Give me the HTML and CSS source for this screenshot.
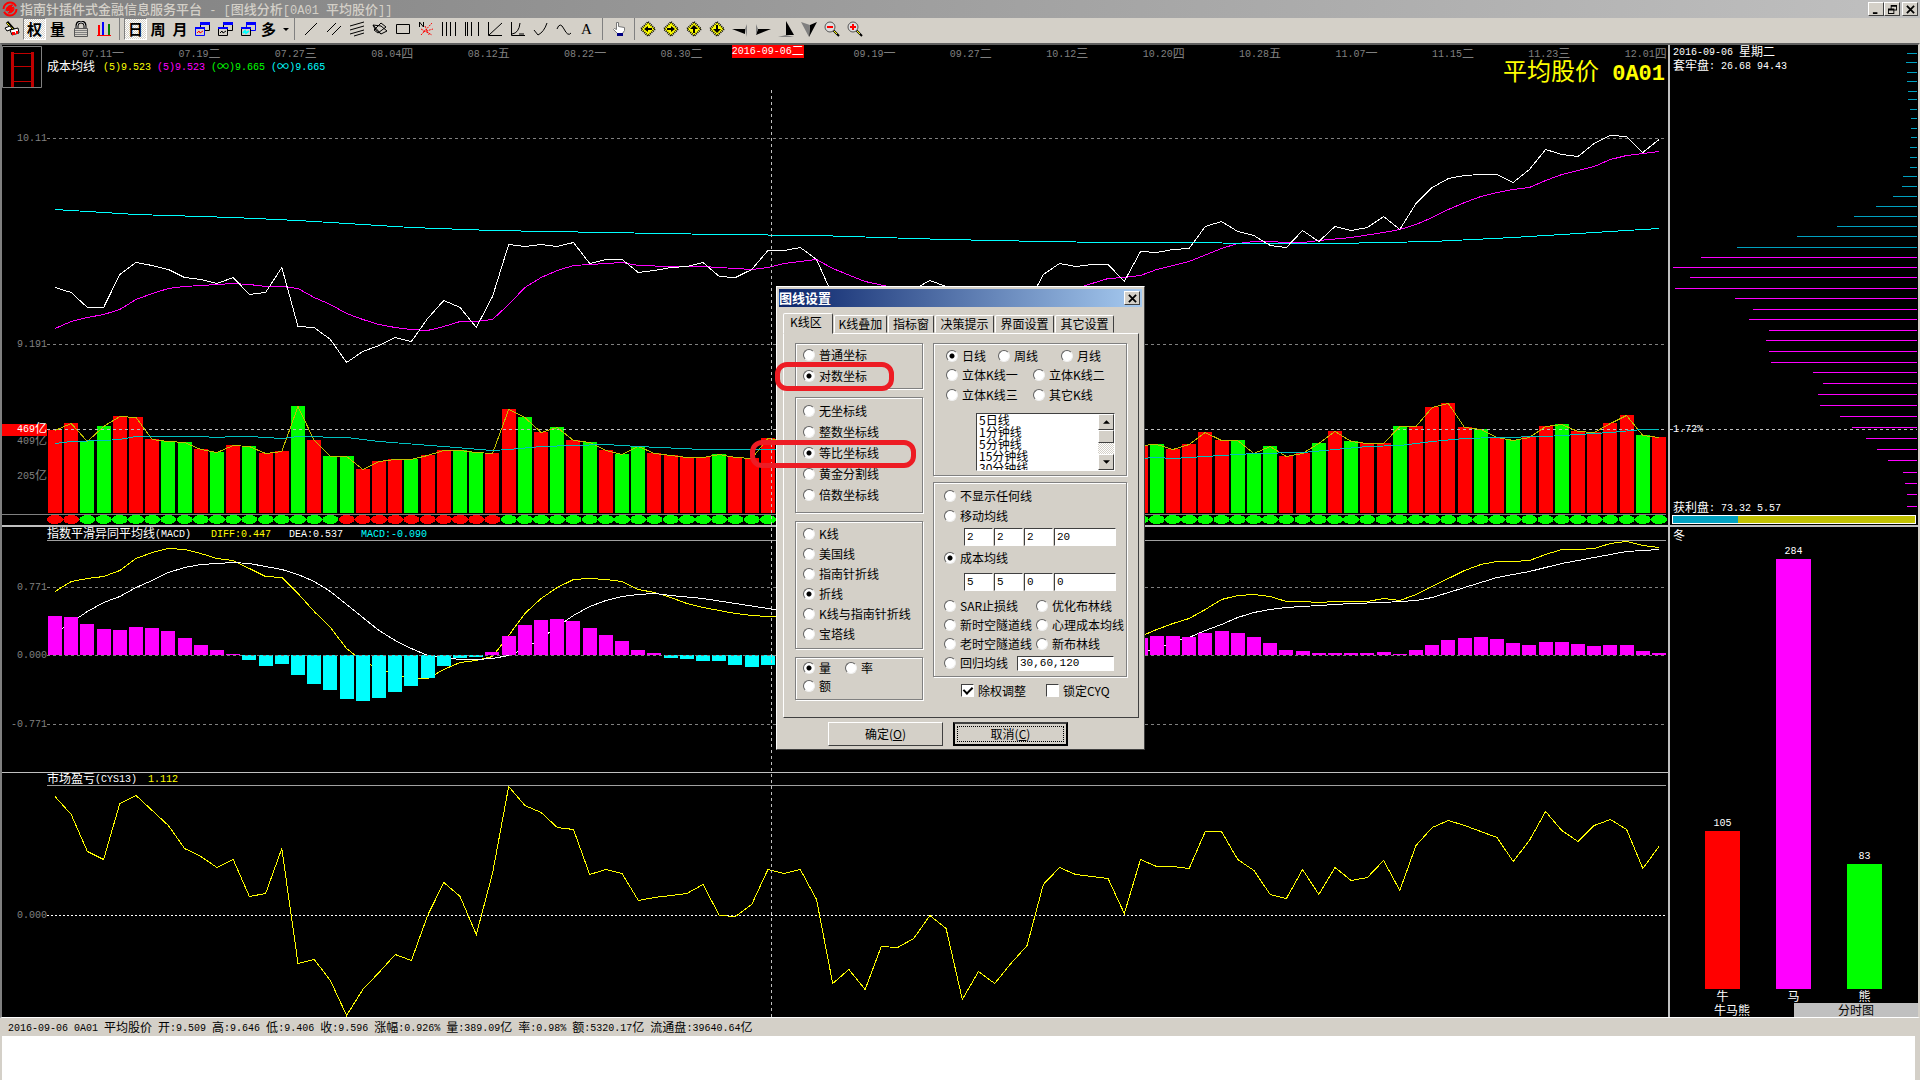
FILE: index.html
```
<!DOCTYPE html>
<html lang="zh-CN">
<head>
  <meta charset="UTF-8">
  <title>指南针插件式金融信息服务平台</title>
  <meta name="viewport" content="width=device-width, initial-scale=1.0">
  <link rel="stylesheet" href="styles.css">
</head>
<body>
  <header class="titlebar">
    <svg class="logo" viewBox="0 0 16 16"><circle cx="8" cy="8" r="6.5" fill="none" stroke="#f00" stroke-width="2" stroke-dasharray="17 3"/><path d="M4 10c0-4 3-6 7-6M6 12c4 0 6-2 6-5M5 7l5-3-1 3 3-1-5 6 1-3-3 1z" fill="#f00" stroke="#f00"/></svg>
    <h1>指南针插件式金融信息服务平台<span> - [</span>图线分析<span>[0A01 </span>平均股价<span>]]</span></h1>
    <div class="win-buttons">
      <button class="win-btn" aria-label="最小化"><svg viewBox="0 0 10 10"><path d="M1 8h5v2H1z"/></svg></button>
      <button class="win-btn" aria-label="还原"><svg viewBox="0 0 10 10"><path d="M3 0h7v6H7v4H0V4h3zM4 2v2h3v1h2V2zM1 6v3h5V6z" fill-rule="evenodd"/></svg></button>
      <button class="win-btn last" aria-label="关闭"><svg viewBox="0 0 10 10"><path d="M1 1l8 8M9 1L1 9" stroke="#000" stroke-width="2"/></svg></button>
    </div>
  </header>

  <nav class="toolbar">
    <div class="tools">
      <button class="tool" aria-label="编辑"><svg viewBox="0 0 16 16"><path d="M3 1l7 8" stroke="#000" stroke-width="3"/><path d="M3 2l6 6" stroke="#ff0"/><path d="M1 7l5-2 2 3-5 2zM6 9l8-2 1 5-7 2z" fill="#fff" stroke="#000"/><path d="M8 11h3v3H8zM12 10h2v3h-2z" fill="#f00"/></svg></button>
      <button class="tool on">权</button>
      <button class="tool">量</button>
      <button class="tool" aria-label="锁定"><svg viewBox="0 0 16 16"><path d="M4 8V5q0-4 4-4t4 4v3" fill="none" stroke="#000" stroke-width="3"/><path d="M4 8V5q0-4 4-4t4 4v3" fill="none" stroke="#ccc"/><path d="M1.500 7.500h13v8h-13z" fill="#d4d0c8" stroke="#555"/><path d="M2 9.500h12M2 11.500h12M2 13.500h12" stroke="#808080"/></svg></button>
      <button class="tool" aria-label="柱图"><svg viewBox="0 0 16 16"><path d="M1 14.500h14" stroke="#f00"/><path d="M3 4v10" stroke="#f00" stroke-width="2"/><path d="M7 1v13" stroke="#00f" stroke-width="2"/><path d="M13 3v11" stroke="green" stroke-width="2"/></svg></button>
    </div>
    <div class="tools">
      <button class="tool on">日</button>
      <button class="tool word">周</button>
      <button class="tool word">月</button>
      <button class="tool" aria-label="窗口一"><svg viewBox="0 0 16 16"><path d="M5.500 2.500h9v7h-9z" fill="#d4d0c8" stroke="#000"/><path d="M5 1h10v3H5z" fill="#00f"/><path d="M.5 6.500h9v8h-9z" fill="#d4d0c8" stroke="#00f"/><path d="M0 6h10v2H0z" fill="#00f"/><path d="M2 12l2-2 1 2 3-2" fill="none" stroke="#f00"/></svg></button>
      <button class="tool" aria-label="窗口二"><svg viewBox="0 0 16 16"><path d="M5.500 2.500h9v7h-9z" fill="#d4d0c8" stroke="#000"/><path d="M5 1h10v3H5z" fill="#00f"/><path d="M.5 6.500h9v8h-9z" fill="#d4d0c8" stroke="#000"/><path d="M0 6h10v2H0z" fill="#00f"/><path d="M2 12l2-2 1 2 3-2" fill="none" stroke="#000"/></svg></button>
      <button class="tool" aria-label="窗口三"><svg viewBox="0 0 16 16"><path d="M5.500 2.500h9v7h-9z" fill="#d4d0c8" stroke="#00f"/><path d="M5 1h10v3H5z" fill="#00f"/><path d="M.5 6.500h9v8h-9z" fill="#d4d0c8" stroke="#000"/><path d="M0 6h10v2H0z" fill="#00f"/><path d="M2 12l2-2 1 2 3-2" fill="none" stroke="#0ff" stroke-width="2"/></svg></button>
      <button class="tool small">多</button>
      <button class="tool small" aria-label="更多"><svg viewBox="0 0 16 16"><path d="M5 7h6l-3 3z"/></svg></button>
    </div>
    <div class="tools line-tools">
      <button class="tool" aria-label="直线"><svg viewBox="0 0 16 16"><path d="M2 14L14 2"/></svg></button>
      <button class="tool" aria-label="平行线"><svg viewBox="0 0 16 16"><path d="M1 11L10 2M6 14l9-9"/></svg></button>
      <button class="tool" aria-label="多平行线"><svg viewBox="0 0 16 16"><path d="M1 5l14-4M1 9l14-4M1 13l14-4M5 15l10-3"/></svg></button>
      <button class="tool" aria-label="多边形"><svg viewBox="0 0 16 16"><path d="M1 4l8 1 6 5-6 3-6-5zM1 4l8 9M9 2l5 4-8 6-4-3z"/></svg></button>
      <button class="tool" aria-label="矩形"><svg viewBox="0 0 16 16"><path d="M1.500 3.500h13v9h-13z"/></svg></button>
      <button class="tool" aria-label="扇形线"><svg viewBox="0 0 16 16"><path d="M1.500 6V1l4 5V1"/><path d="M3 14L14 2M3 8l11 6M7 5l4 9M5 11l10-3" stroke="#f00" stroke-dasharray="2 1"/></svg></button>
      <button class="tool" aria-label="等距线"><svg viewBox="0 0 16 16"><path d="M1.500 1v14M5.500 1v14M9.500 1v14M14.500 1v14"/></svg></button>
      <button class="tool" aria-label="周期线"><svg viewBox="0 0 16 16"><path d="M1.500 1v14M3.500 1v14M7.500 1v14M14.500 1v14"/></svg></button>
      <button class="tool" aria-label="角度线"><svg viewBox="0 0 16 16"><path d="M1.500 1v13.500H15M2 14L15 2"/></svg></button>
      <button class="tool" aria-label="弧线"><svg viewBox="0 0 16 16"><path d="M1.500 1v13.500H15M2 13q7-1 8-11M9 13l5 0"/></svg></button>
      <button class="tool" aria-label="抛物线"><svg viewBox="0 0 16 16"><path d="M1 9l4 5q6-3 9-12"/></svg></button>
      <button class="tool" aria-label="正弦线"><svg viewBox="0 0 16 16"><path d="M1 8q3-8 7 0t7 4"/></svg></button>
      <button class="tool letter">A</button>
    </div>
    <div class="tools hand">
      <button class="tool" aria-label="手形"><svg viewBox="0 0 16 16"><path d="M5.500 1.500h2v4l6 1v3l-2 3h-5l-4-4 1-1 2 1z" fill="#fff" stroke="#777"/><path d="M6 12h6v3H6z" fill="#000080"/></svg></button>
    </div>
    <div class="tools">
      <button class="tool" aria-label="左移"><svg viewBox="0 0 16 16"><path d="M8 1l7 7-7 7-7-7z" fill="#ff0" stroke="#000" stroke-dasharray="1 1" stroke-width="2"/><path d="M4 8l4-3v2h4v2H8v2z"/></svg></button>
      <button class="tool" aria-label="右移"><svg viewBox="0 0 16 16"><path d="M8 1l7 7-7 7-7-7z" fill="#ff0" stroke="#000" stroke-dasharray="1 1" stroke-width="2"/><path d="M12 8L8 5v2H4v2h4v2z"/></svg></button>
      <button class="tool" aria-label="上移"><svg viewBox="0 0 16 16"><path d="M8 1l7 7-7 7-7-7z" fill="#ff0" stroke="#000" stroke-dasharray="1 1" stroke-width="2"/><path d="M8 4l4 4h-3v4H7V8H4z"/></svg></button>
      <button class="tool" aria-label="下移"><svg viewBox="0 0 16 16"><path d="M8 1l7 7-7 7-7-7z" fill="#ff0" stroke="#000" stroke-dasharray="1 1" stroke-width="2"/><path d="M8 12L4 8h3V4h2v4h3z"/></svg></button>
      <button class="tool" aria-label="向左"><svg viewBox="0 0 16 16"><path d="M0 8h13v5z"/><path d="M13 8l2-5v13z" fill="#808080"/></svg></button>
      <button class="tool" aria-label="向右"><svg viewBox="0 0 16 16"><path d="M16 8H3l-2 6z"/><path d="M1 14V3l2 5z" fill="#808080"/></svg></button>
      <button class="tool" aria-label="向上"><svg viewBox="0 0 16 16"><path d="M8 0v14h8z"/><path d="M0 16l8-2 8 2z" fill="#808080"/></svg></button>
      <button class="tool" aria-label="向下"><svg viewBox="0 0 16 16"><path d="M8 16l1-12 7-3z"/><path d="M0 1l9 3-1 12z" fill="#808080"/></svg></button>
      <button class="tool" aria-label="缩小"><svg viewBox="0 0 16 16"><path d="M9 9l6 6" stroke="#000" stroke-width="2"/><path d="M10 10l3 3" stroke="#ff0"/><circle cx="6" cy="6" r="5" fill="#ddd" stroke="#555"/><path d="M3 6h6" stroke="#f00" stroke-width="2"/></svg></button>
      <button class="tool" aria-label="放大"><svg viewBox="0 0 16 16"><path d="M9 9l6 6" stroke="#000" stroke-width="2"/><path d="M10 10l3 3" stroke="#ff0"/><circle cx="6" cy="6" r="5" fill="#ddd" stroke="#555"/><path d="M3 6h6M6 3v6" stroke="#f00" stroke-width="2"/></svg></button>
    </div>
  </nav>

  <main class="workspace">
    <section class="charts">
      <div class="panel price">
        <svg id="price" class="plot" viewBox="2 45 1666 480" preserveAspectRatio="none"></svg>
        <div class="dates">
          <span>07.11<i>一</i></span><span>07.19<i>二</i></span><span>07.27<i>三</i></span><span>08.04<i>四</i></span><span>08.12<i>五</i></span><span>08.22<i>一</i></span><span>08.30<i>二</i></span><span class="covered">09.07<i>三</i></span><span>09.19<i>一</i></span><span>09.27<i>二</i></span><span>10.12<i>三</i></span><span>10.20<i>四</i></span><span>10.28<i>五</i></span><span>11.07<i>一</i></span><span>11.15<i>二</i></span><span>11.23<i>三</i></span><span>12.01<i>四</i></span>
        </div>
        <svg class="period" viewBox="0 0 40 42"><path d="M.5.5h39v41H.5z" fill="#000" stroke="#808080"/><path d="M10.500 6v35M30.500 6v35" stroke="#c00000" stroke-width="3"/><path d="M9 7.500h22M10 20.500h21M10 35.500h21" stroke="#c00000"/></svg>
        <div class="legend">
          <span><i>成本均线</i></span>
          <span class="yellow">(5)9.523</span>
          <span class="magenta">(5)9.523</span>
          <span class="green">(<i>∞</i>)9.665</span>
          <span class="cyan">(<i>∞</i>)9.665</span>
        </div>
        <h2 class="stock">平均股价<b> 0A01</b></h2>
        <span class="axis y1011">10.11</span>
        <span class="axis y9191">9.191</span>
        <span class="axis y409">409<i>亿</i></span>
        <span class="axis y205">205<i>亿</i></span>
        <span class="axis y469">469<i>亿</i></span>
      </div>
      <div class="panel macd">
        <svg id="macd" class="plot" viewBox="2 527 1666 245" preserveAspectRatio="none"></svg>
        <div class="legend">
          <span><i>指数平滑异同平均线</i>(MACD)</span>
          <span class="yellow">DIFF:0.447</span>
          <span>DEA:0.537</span>
          <span class="cyan">MACD:-0.090</span>
        </div>
        <span class="axis m1">0.771</span>
        <span class="axis m2">0.000</span>
        <span class="axis m3">-0.771</span>
      </div>
      <div class="panel cys">
        <svg id="cys" class="plot" viewBox="2 773 1666 244" preserveAspectRatio="none"></svg>
        <div class="legend">
          <span><i>市场盈亏</i>(CYS13)</span>
          <span class="yellow">1.112</span>
        </div>
        <span class="axis c0">0.000</span>
      </div>
      <div class="cursor"></div>
      <div class="cursor-date">2016-09-06<i>二</i></div>
    </section>

    <aside class="side">
      <div class="panel chips">
        <svg id="chips" class="plot" viewBox="1670 45 248 480" preserveAspectRatio="none"></svg>
        <div class="chips-text">
          <p>2016-09-06 <i>星期二</i></p>
          <p><i>套牢盘</i>: 26.68 94.43</p>
        </div>
        <span class="percent">1.72%</span>
        <div class="profit">
          <p><i>获利盘</i>: 73.32 5.57</p>
          <div class="gauge"><div class="gauge-fill" style="width: 26.68%"></div></div>
        </div>
      </div>
      <div class="bulls">
        <span class="season"><i>冬</i></span>
        <div class="cols">
          <div class="col"><b>105</b><div class="bar red" style="height: 158px"></div><i>牛</i></div>
          <div class="col"><b>284</b><div class="bar pink" style="height: 430px"></div><i>马</i></div>
          <div class="col"><b>83</b><div class="bar lime" style="height: 125px"></div><i>熊</i></div>
        </div>
        <div class="side-tabs">
          <button class="side-tab current">牛马熊</button>
          <button class="side-tab">分时图</button>
        </div>
      </div>
    </aside>

    <section class="dialog" role="dialog" aria-label="图线设置">
      <div class="dialog-title">
        <h2>图线设置</h2>
        <button class="win-btn" aria-label="关闭"><svg viewBox="0 0 10 10"><path d="M1 1l8 8M9 1L1 9" stroke="#000" stroke-width="2"/></svg></button>
      </div>
      <div class="tabs">
        <button class="tab active">K线区</button>
        <button class="tab">K线叠加</button>
        <button class="tab short">指标窗</button>
        <button class="tab long">决策提示</button>
        <button class="tab long">界面设置</button>
        <button class="tab long">其它设置</button>
      </div>
      <form class="pane">
        <div class="left-col">
          <fieldset class="group coord">
            <label><input type="radio" name="coord">普通坐标</label>
            <label><input type="radio" name="coord" checked>对数坐标</label>
          </fieldset>
          <fieldset class="group grid">
            <label><input type="radio" name="grid">无坐标线</label>
            <label><input type="radio" name="grid">整数坐标线</label>
            <label><input type="radio" name="grid" checked>等比坐标线</label>
            <label><input type="radio" name="grid">黄金分割线</label>
            <label><input type="radio" name="grid">倍数坐标线</label>
          </fieldset>
          <fieldset class="group kind">
            <label><input type="radio" name="kind">K线</label>
            <label><input type="radio" name="kind">美国线</label>
            <label><input type="radio" name="kind">指南针折线</label>
            <label><input type="radio" name="kind" checked>折线</label>
            <label><input type="radio" name="kind">K线与指南针折线</label>
            <label><input type="radio" name="kind">宝塔线</label>
          </fieldset>
          <fieldset class="group amount">
            <label><input type="radio" name="amount" checked>量</label>
            <label><input type="radio" name="amount">率</label>
            <label><input type="radio" name="amount">额</label>
          </fieldset>
        </div>
        <div class="right-col">
          <fieldset class="group period-group">
            <div class="three">
              <label><input type="radio" name="period" checked>日线</label>
              <label><input type="radio" name="period">周线</label>
              <label><input type="radio" name="period">月线</label>
            </div>
            <div class="two">
              <label><input type="radio" name="period">立体K线一</label>
              <label><input type="radio" name="period">立体K线二</label>
              <label><input type="radio" name="period">立体K线三</label>
              <label><input type="radio" name="period">其它K线</label>
            </div>
            <div class="listbox">
              <select size="5" aria-label="周期">
                <option>5日线</option>
                <option>1分钟线</option>
                <option>5分钟线</option>
                <option>15分钟线</option>
                <option>30分钟线</option>
              </select>
              <div class="scroll">
                <button type="button" class="scroll-btn" aria-label="向上滚动"><svg viewBox="0 0 8 4"><path d="M4 0l4 4H0z"/></svg></button>
                <div class="thumb"></div>
                <button type="button" class="scroll-btn end" aria-label="向下滚动"><svg viewBox="0 0 8 4"><path d="M0 0h8L4 4z"/></svg></button>
              </div>
            </div>
          </fieldset>
          <fieldset class="group avg">
            <label><input type="radio" name="avg">不显示任何线</label>
            <label><input type="radio" name="avg">移动均线</label>
            <div class="nums">
              <input type="text" value="2" aria-label="移动均线一"><input type="text" value="2" aria-label="移动均线二"><input type="text" value="2" aria-label="移动均线三"><input type="text" class="big" value="20" aria-label="移动均线四">
            </div>
            <label><input type="radio" name="avg" checked>成本均线</label>
            <div class="nums cost">
              <input type="text" value="5" aria-label="成本均线一"><input type="text" value="5" aria-label="成本均线二"><input type="text" value="0" aria-label="成本均线三"><input type="text" class="big" value="0" aria-label="成本均线四">
            </div>
            <div class="pairs">
              <label><input type="radio" name="avg">SAR止损线</label>
              <label><input type="radio" name="avg">优化布林线</label>
              <label><input type="radio" name="avg">新时空隧道线</label>
              <label><input type="radio" name="avg">心理成本均线</label>
              <label><input type="radio" name="avg">老时空隧道线</label>
              <label><input type="radio" name="avg">新布林线</label>
            </div>
            <div class="regress">
              <label><input type="radio" name="avg">回归均线</label>
              <input type="text" value="30,60,120" aria-label="回归均线参数">
            </div>
          </fieldset>
          <div class="checks">
            <label><input type="checkbox" checked>除权调整</label>
            <label><input type="checkbox">锁定CYQ</label>
          </div>
        </div>
      </form>
      <div class="actions">
        <button class="btn">确定(<u>O</u>)</button>
        <button class="btn default">取消(<u>C</u>)</button>
      </div>
      <div class="mark mark-a"></div>
      <div class="mark mark-b"></div>
    </section>
  </main>

  <footer class="status">2016-09-06 0A01 <i>平均股价</i> <i>开</i>:9.509 <i>高</i>:9.646 <i>低</i>:9.406 <i>收</i>:9.596 <i>涨幅</i>:0.926% <i>量</i>:389.09<i>亿</i> <i>率</i>:0.98% <i>额</i>:5320.17<i>亿</i> <i>流通盘</i>:39640.64<i>亿</i></footer>
  <div class="blank"></div>

  <script src="script.js"></script>
</body>
</html>
```

FILE: styles.css
```
* { box-sizing: border-box; }
body {
  margin: 0; min-height: 100vh;
  display: flex; flex-direction: column;
  background: #d4d0c8; color: #000;
  font: 12px/14px "Noto Sans CJK SC", sans-serif;
}
button, input, select { font: inherit; color: inherit; margin: 0; padding: 0; border: 0; }
button { background: none; cursor: pointer; }
h1, h2, p { margin: 0; font-weight: normal; }
/* chinese glyphs inside the narrow mono text */
i { font: 12px/0 "Noto Sans CJK SC", sans-serif; font-style: normal; vertical-align: -1px; }

/* title bar */
.titlebar {
  display: flex; align-items: center; height: 18px; padding: 0 2px;
  background: linear-gradient(90deg, #808080, #c0c0c0);
}
.logo { width: 16px; height: 16px; margin-right: 2px; }
.titlebar h1 { flex: 1; font-size: 13px; line-height: 18px; font-weight: 500; color: #d4d0c8; white-space: pre; }
.titlebar h1 span { font: 12px/0 "Liberation Mono", monospace; }
.win-buttons { display: flex; }
.win-btn {
  display: flex; align-items: center; justify-content: center;
  width: 16px; height: 14px; background: #d4d0c8;
  border: 1px solid; border-color: #fff #404040 #404040 #fff;
}
.win-btn.last { margin-left: 2px; }
.win-btn svg { width: 9px; height: 9px; }

/* toolbar */
.toolbar { display: flex; height: 25px; }
.tools { display: flex; border-right: 1px solid #808080; margin-right: 4px; height: 22px; }
.tools:first-child { padding-right: 4px; }
.tools:last-child { border: 0; }
.tool {
  width: 23px; height: 22px; display: flex; align-items: center; justify-content: center;
  font-size: 15px; font-weight: 700; line-height: 20px;
}
.tool svg { width: 16px; height: 16px; }
.tool.word { width: 22px; }
.tool.small { width: 17px; }
.tool.letter { font: 15px "Liberation Serif", serif; }
.tool.on {
  border: 1px solid; border-color: #808080 #fff #fff #808080;
  background: repeating-conic-gradient(#fff 0 25%, #d4d0c8 0 50%) 0 0 / 2px 2px;
}
.line-tools { padding-right: 4px; }
.line-tools svg { fill: none; stroke: #000; }
.tools.hand { padding-right: 4px; margin-right: 1px; }

/* charts */
.workspace {
  flex: 1; display: flex; position: relative; min-height: 975px;
  border: solid #808080; border-width: 2px 2px 1px 2px;
  border-top-color: #606060; border-right-color: #d4d0c8; border-bottom-color: #fff;
  background: #c0c0c0;
  font: 10px/12px "Liberation Mono", monospace; color: #fff;
}
.charts { flex: 1; position: relative; display: flex; flex-direction: column; gap: 1px; margin-right: 2px; }
.panel { position: relative; background: #000; }
.price { flex: 480; margin-bottom: 1px; }
.macd { flex: 245; }
.cys { flex: 244; }
.plot { position: absolute; width: 100%; height: 100%; shape-rendering: crispEdges; }
.plot * { vector-effect: non-scaling-stroke; }
.dates {
  position: relative; display: flex; justify-content: space-between;
  padding: 4px 1px 0 80px; color: #808080;
}
.covered { visibility: hidden; }
.period { position: absolute; left: 0; top: 1px; width: 40px; height: 42px; }
.legend { position: relative; display: flex; gap: 6px; padding: 1px 0 0 45px; }
.legend span:first-child { margin-right: 2px; }
.macd .legend { gap: 18px; padding-top: 2px; }
.cys .legend { gap: 9px; }
.yellow { color: #ff0; }
.magenta { color: #f0f; }
.green { color: #0f0; }
.cyan { color: #0ff; }
.stock {
  position: absolute; right: 3px; top: 12px; color: #ff0; white-space: pre;
  font: 24px/26px "Noto Sans CJK SC", sans-serif;
}
.stock b { font: bold 22px/0 "Liberation Mono", monospace; }
.axis { position: absolute; left: 0; width: 45px; height: 12px; text-align: right; color: #808080; transform: translateY(-50%); }
.y1011 { top: 19.6%; }
.y9191 { top: 62.5%; }
.y409 { top: 82.8%; }
.y205 { top: 90%; }
.y469 { top: 80.2%; background: #f00; color: #fff; }
.m1 { top: 24.8%; }
.m2 { top: 52.5%; }
.m3 { top: 80.7%; }
.c0 { top: 58.5%; }
.cursor {
  position: absolute; left: 46.15%; top: 45px; bottom: 0; width: 1px;
  background: repeating-linear-gradient(#c0c0c0 0 3px, transparent 3px 6px);
}
.cursor-date { position: absolute; left: 43.8%; top: 0; padding-top: 1px; background: #f00; }

/* right side */
.side { width: 248px; display: flex; flex-direction: column; gap: 2px; }
.chips { flex: 480; }
.chips-text { position: relative; padding: 2px 3px; }
.chips-text p { height: 14px; }
.percent { position: absolute; left: 3px; top: 80.2%; transform: translateY(-50%); }
.profit { position: absolute; left: 2px; right: 2px; bottom: 1px; }
.profit p { padding-left: 1px; }
.gauge { height: 9px; border: 1px solid #fff; background: #c0c000; }
.gauge-fill { height: 100%; background: #00a0c0; }
.bulls { flex: 490; display: flex; flex-direction: column; background: #000; position: relative; }
.season { position: absolute; left: 3px; top: 4px; }
.cols { flex: 1; display: flex; justify-content: space-between; align-items: flex-end; padding: 0 36px 0 35px; }
.col { width: 35px; display: flex; flex-direction: column; align-items: center; }
.col b { font-weight: normal; line-height: 14px; }
.col i { line-height: 14px; }
.bar { width: 100%; }
.red { background: #f00; }
.pink { background: #f0f; }
.lime { background: #0f0; }
.side-tabs { display: flex; }
.side-tab { flex: 1; font: 12px/14px "Noto Sans CJK SC", sans-serif; background: #c0c0c0; color: #000; }
.side-tab.current { background: #000; color: #fff; }

/* settings dialog */
.dialog {
  position: absolute; left: 774px; top: 241px; width: 369px; height: 464px;
  padding: 2px; background: #d4d0c8; color: #000;
  border: 1px solid; border-color: #fff #404040 #404040 #fff;
  font: 12px/14px "Noto Sans CJK SC", sans-serif;
}
.dialog-title {
  display: flex; align-items: center; justify-content: space-between;
  height: 18px; padding: 0 2px 0 0; color: #fff;
  background: linear-gradient(90deg, #0a246a, #a6caf0);
}
.dialog-title h2 { font-size: 13px; font-weight: 700; line-height: 16px; }
.tabs { display: flex; align-items: flex-end; height: 26px; padding: 0 4px; }
.tab {
  width: 53px; height: 18px; margin-right: 1px; white-space: nowrap;
  border: 1px solid; border-color: #fff #404040 transparent #fff; border-radius: 2px 2px 0 0;
}
.tab.short { width: 46px; }
.tab.long { width: 59px; }
.tab.active { width: 50px; height: 21px; margin-bottom: -1px; padding: 0 4px 3px 0; background: #d4d0c8; position: relative; z-index: 1; }
.pane {
  display: flex; gap: 10px; height: 385px; margin: 0 3px 0 4px; padding: 9px 11px;
  border: 1px solid; border-color: #fff #404040 #404040 #fff;
}
.left-col { width: 128px; display: flex; flex-direction: column; gap: 8px; }
.right-col { flex: 1; }
.group { margin: 0; padding: 0 7px; border: 1px solid #808080; box-shadow: 1px 1px #fff, inset 1px 1px #fff; min-width: 0; }
label { display: flex; align-items: center; gap: 4px; height: 21px; white-space: nowrap; }
input[type="radio"] {
  appearance: none; flex: none; width: 12px; height: 12px; border-radius: 50%;
  background: #fff; border: 1px solid; border-color: #606060 #f0f0f0 #f0f0f0 #606060;
}
input[type="radio"]:checked { background: radial-gradient(#000 0 2px, #fff 3px); }
.coord { height: 46px; }
.grid { height: 116px; padding-top: 2px; }
.kind { height: 128px; padding-top: 2px; }
.kind label { height: 20px; }
.amount { height: 43px; padding-top: 1px; display: flex; flex-wrap: wrap; column-gap: 14px; }
.amount label { height: 18px; }
.amount label:last-child { width: 100%; }
.period-group { height: 133px; padding: 1px 5px 0 12px; }
.three { display: grid; grid-template-columns: 52px 63px 1fr; height: 20px; align-items: center; }
.two { display: grid; grid-template-columns: 87px 1fr; }
.two label { height: 20px; }
.listbox {
  display: flex; width: 139px; height: 58px; margin: 8px 0 0 30px; overflow: hidden;
  background: #fff; border: 1px solid; border-color: #404040 #fff #fff #404040;
}
.listbox select { flex: 1; height: 64px; margin-top: -3px; overflow: hidden; background: #fff; outline: 0; }
.listbox option { height: 12px; min-height: 12px; padding: 0 2px; line-height: 12px; }
.scroll { width: 16px; display: flex; flex-direction: column; background: repeating-conic-gradient(#fff 0 25%, #d4d0c8 0 50%) 0 0 / 2px 2px; }
.scroll-btn, .thumb {
  width: 16px; height: 16px; background: #d4d0c8; display: flex; align-items: center; justify-content: center;
  border: 1px solid; border-color: #fff #404040 #404040 #fff;
}
.thumb { height: 13px; }
.scroll-btn svg { width: 7px; height: 4px; }
.scroll-btn.end { margin-top: auto; }
.avg { height: 195px; margin-top: 6px; padding: 3px 0 0 10px; }
input[type="text"] {
  width: 29px; height: 18px; padding: 0 2px; background: #fff;
  border: 1px solid; border-color: #404040 #fff #fff #404040;
  font: 11px/14px "Liberation Mono", monospace;
}
.nums { display: flex; gap: 1px; padding-left: 20px; height: 22px; align-items: center; }
.nums.cost { height: 28px; }
.nums .big { width: 62px; }
.avg label { height: 20px; }
.pairs { display: grid; grid-template-columns: 92px 1fr; }
.pairs label { height: 19px; }
.regress { display: flex; gap: 9px; align-items: center; }
.regress input[type="text"] { width: 97px; height: 15px; }
.checks { display: flex; gap: 20px; padding: 3px 0 0 28px; }
input[type="checkbox"] {
  appearance: none; width: 13px; height: 13px; background: #fff;
  border: 1px solid; border-color: #404040 #fff #fff #404040;
}
input[type="checkbox"]:checked::after {
  content: ""; display: block; width: 4px; height: 7px; margin: 0 0 0 3px;
  border: solid #000; border-width: 0 2px 2px 0; transform: rotate(45deg);
}
.actions { display: flex; gap: 10px; padding: 4px 49px; }
.btn { width: 115px; height: 24px; border: 1px solid; border-color: #fff #404040 #404040 #fff; }
.btn.default { border: 2px solid #000; border-top-color: #404040; outline: 1px dotted #000; outline-offset: -5px; }
.mark { position: absolute; border: 5px solid #ed1c24; border-radius: 12px; }
.mark-a { left: -2px; top: 75px; width: 119px; height: 29px; }
.mark-b { left: -27px; top: 153px; width: 166px; height: 28px; }

/* status bar */
.status {
  height: 18px; padding: 1px 8px 0; white-space: pre;
  font: 10px/20px "Liberation Mono", monospace;
}
.blank { height: 44px; margin: 0 5px 0 2px; background: #fff; }
```

FILE: script.js
```
const NS = 'http://www.w3.org/2000/svg';
const STEP = 1604 / 99;
const barX = i => 55 + i * STEP;

function add(svg, tag, attrs) {
  const el = document.createElementNS(NS, tag);
  for (const key in attrs) el.setAttribute(key, attrs[key]);
  svg.appendChild(el);
}

// values: array of y, or object {bar index: y}
function line(svg, values, color) {
  const points = Object.entries(values).map(([i, y]) => `${barX(i).toFixed(1)},${y + 0.5}`).join(' ');
  add(svg, 'polyline', { points, fill: 'none', stroke: color });
}

function hline(svg, y, color, dash, x1 = 47, x2 = 1666) {
  add(svg, 'line', { x1, x2, y1: y + 0.5, y2: y + 0.5, stroke: color, 'stroke-dasharray': dash || 'none' });
}

const price = document.getElementById('price');
const macd = document.getElementById('macd');
const cys = document.getElementById('cys');
const chips = document.getElementById('chips');

// price lines
hline(price, 138, '#808080', '3 3');
hline(price, 344, '#808080', '3 3');
line(price, {0:328,1:321,2:317,3:314,4:309,5:299,6:293,7:288,8:286,9:285,10:284,11:283,12:284,13:286,14:286,15:288,16:297,17:304,18:313,19:319,20:324,21:327,22:329,23:330,24:326,25:321,26:321,27:319,28:304,29:287,30:277,31:270,32:265,33:264,34:263,35:262,36:265,38:266,40:266,41:267,43:269,44:267,45:263,46:261,47:259,48:268,50:281,52:288,58:300,62:294,63:288,65:278,66:277,67:275,68:269,70:261,72:248,73:243,74:241,75:241,76:242,77:242,78:240,80:237,82:232,83:229,84:224,85:217,86:209,87:202,88:196,89:192,90:189,91:187,92:180,93:174,95:166,96:159,97:155,98:153,99:151}, '#f0f');
line(price, {0:209,5:214,11:217,15:220,22:227,27:230,34:232,41:234,47:235,55:239,61:241,65:242,79:243,85:241,90:237,95:232,99:228}, '#0ff');
line(price, [287,292,307,307,274,262,265,269,277,279,283,277,294,292,267,326,327,339,362,351,345,337,341,318,300,307,327,296,244,246,244,246,242,263,259,259,272,270,267,266,262,276,277,269,250,250,247,259,295,300,300,300,300,289,280,286,310,330,330,320,305,274,263,266,264,264,281,251,252,249,248,226,221,231,235,245,247,230,241,226,230,227,216,229,203,187,178,175,174,174,182,169,149,154,156,143,135,136,152,139], '#fff');

// volume
const volume = [430,423,441,426,416,417,439,441,442,449,452,445,446,453,451,406,440,456,456,469,461,459,459,455,450,450,452,453,409,417,432,427,440,442,450,454,446,453,455,457,457,454,457,458,438,440,442,445,445,450,450,452,450,448,450,452,455,455,455,450,450,448,450,448,446,445,445,445,444,449,444,432,440,440,453,446,456,453,443,431,441,443,443,426,426,407,403,427,429,437,440,437,426,424,431,432,423,415,435,437];
const falling = [2,3,7,8,10,12,15,17,18,22,25,26,29,31,33,35,36,41,68,73,74,75,78,80,83,88,90,93,98];
volume.forEach((y, i) => {
  add(price, 'rect', { x: Math.round(barX(i) - 7), y, width: 14, height: 513 - y, fill: falling.includes(i) ? '#0f0' : '#f00' });
  add(price, 'ellipse', { cx: barX(i), cy: 519.5, rx: 8, ry: 4.5, fill: i < 2 || (i > 17 && i < 28) ? '#f00' : '#0f0' });
});
hline(price, 514, '#808080', '', 2);
hline(price, 429, '#c0c0c0', '3 3');
line(price, volume, '#c0c000');
line(price, {0:443,1:441,3:440,4:439,5:436,9:436,10:437,11:436,12:436,14:438,15:436,18:437,20:441,24:446,27:450,28:449,30:446,32:445,34:444,36:446,40:449,44:449,60:458,67:458,68:457,69:458,72:455,74:453,77:452,79:449,81:446,83:445,85:441,87:438,89:437,92:436,94:434,96:432,98:429,99:429}, '#00c0c0');

// MACD
hline(macd, 540, '#a0a0a0');
hline(macd, 587, '#808080', '3 3');
hline(macd, 724, '#808080', '3 3');
line(macd, {0:591,1:581,2:578,3:576,4:570,5:558,6:552,7:548,8:549,9:553,10:558,11:560,12:568,13:576,14:577,15:593,16:611,17:627,18:648,19:661,20:668,21:674,22:678,23:678,24:669,25:662,26:660,27:656,28:635,29:613,30:598,31:587,32:579,33:578,34:579,35:581,36:589,37:592,38:597,39:603,40:607,41:610,42:613,43:615,44:616,50:622,58:655,65:645,67:636,68:629,69:623,70:618,71:609,72:599,73:595,74:594,75:596,76:601,77:601,78:602,79:601,81:601,82:598,83:600,84:594,85:586,86:578,87:570,88:564,89:561,90:561,91:560,92:554,93:549,94:549,95:548,96:543,97:541,98:545,99:547}, '#ff0');
line(macd, {0:633,1:622,2:611,3:602,4:596,5:587,6:580,7:572,8:567,9:564,10:563,11:562,12:563,13:566,14:569,15:574,16:581,17:591,18:604,19:617,20:630,21:640,22:648,23:655,24:657,25:659,26:659,27:658,28:655,29:648,30:638,31:626,32:615,33:606,34:600,35:596,36:594,37:593,38:595,40:598,42:603,44:608,55:640,65:655,67:651,68:649,69:641,70:637,71:630,72:624,73:617,74:612,75:609,76:607,78:605,80:603,82:602,84:600,85:597,86:592,87:587,88:582,89:577,91:571,93:563,95:557,97:551,99:549}, '#fff');
const hist = [616,617,624,629,630,627,628,631,638,645,650,654,660,666,664,675,684,690,699,701,698,692,686,678,666,658,657,652,636,625,620,619,621,628,635,641,650,653,658,659,661,661,665,667,665,665,665,665,665,665,665,665,665,665,665,665,660,650,645,645,642,642,640,640,640,638,638,638,636,636,637,633,631,633,637,643,650,651,653,653,653,653,652,654,650,645,640,638,637,639,643,645,642,642,644,646,645,645,651,653];
hist.forEach((y, i) => {
  add(macd, 'rect', { x: Math.round(barX(i) - 7), y: Math.min(y, 655), width: 14, height: Math.abs(655 - y), fill: y < 655 ? '#f0f' : '#0ff' });
});
hline(macd, 655, '#808080', '3 3');

// CYS
hline(cys, 785, '#a0a0a0');
hline(cys, 915, '#fff', '2 2');
line(cys, [796,814,851,859,803,795,810,825,848,856,867,859,896,893,848,963,959,980,1015,989,972,954,960,915,882,896,934,873,786,805,812,827,829,874,869,873,900,897,895,893,884,915,916,904,869,873,869,899,983,969,989,946,947,938,915,928,999,971,983,963,945,884,867,874,876,878,913,859,866,866,868,831,831,859,870,894,898,869,894,867,880,877,860,890,845,827,820,825,831,837,861,840,811,830,841,825,819,829,868,846], '#ff0');

// chip distribution: [y, length]
const chip = [[53,10],[62,11],[72,10],[81,10],[91,9],[99,9],[109,7],[118,6],[128,6],[137,6],[147,7],[157,7],[167,7],[176,14],[186,15],[196,24],[206,41],[216,63],[226,80],[236,120],[247,180],[257,216],[267,244],[277,227],[288,242],[298,182],[309,164],[319,168],[330,148],[340,151],[351,148],[362,146],[372,104],[383,94],[394,99],[405,97],[416,77],[427,65],[438,51],[449,40],[460,29],[472,14],[483,12],[494,10],[506,10]];
chip.forEach(([y, len]) => hline(chips, y, y < 250 ? '#00a0c0' : '#f0f', '', 1917 - len, 1917));
hline(chips, 429, '#c0c0c0', '3 3', 1670, 1917);
```
